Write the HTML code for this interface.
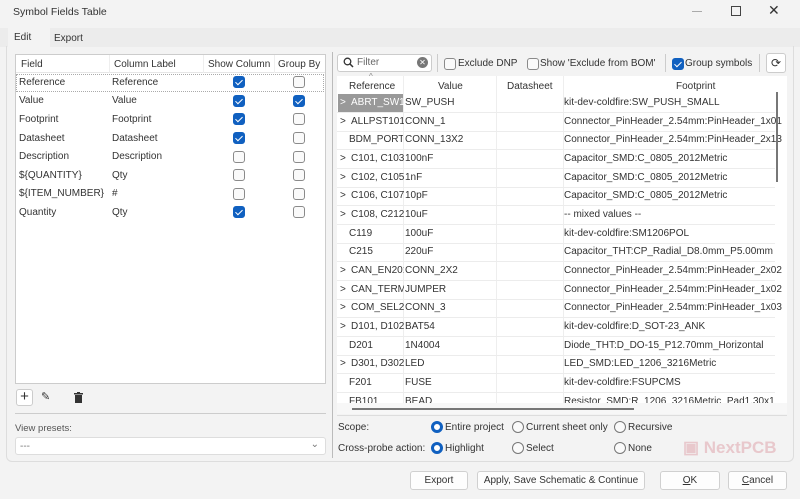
<!DOCTYPE html>
<html><head><meta charset="utf-8"><style>
*{box-sizing:border-box;margin:0;padding:0}
body{width:800px;height:499px;background:#f3f3f3;font-family:"Liberation Sans",sans-serif;font-size:10px;color:#333;position:relative;overflow:hidden}
.a{position:absolute;white-space:nowrap}
.cb{position:absolute;width:12px;height:12px;border:1px solid #8a8a8a;border-radius:3px;background:#fafafa}
.cb.on{background:#1060c0;border-color:#1060c0}
.cb.on:after{content:"";position:absolute;left:3px;top:1px;width:3px;height:6px;border:solid #fff;border-width:0 1.5px 1.5px 0;transform:rotate(45deg)}
.rd{position:absolute;width:12px;height:12px;border:1px solid #777;border-radius:50%;background:#fafafa}
.rd.on{border:3.5px solid #1060c0;background:#fff}
.btn{position:absolute;height:19px;border:1px solid #d0d0d0;border-radius:3px;background:#fdfdfd;text-align:center;line-height:17px;font-size:10px}
.row{position:absolute;left:337px;width:438px;height:19px;border-bottom:1px solid #ececec;line-height:18px;white-space:nowrap}
.row span{position:absolute;overflow:hidden;white-space:nowrap}
.row span:nth-last-child(3){width:53px}
</style></head><body>
<div class="a" style="left:13px;top:6px;font-size:10.5px">Symbol Fields Table</div>
<div class="a" style="left:692px;top:11px;width:10px;border-top:1px solid #aaa"></div>
<div class="a" style="left:731px;top:6px;width:10px;height:10px;border:1px solid #444"></div>
<div class="a" style="left:768px;top:2px;font-size:14px;color:#333">✕</div>
<div class="a" style="left:0;top:28px;width:800px;height:19px;background:#ececec"></div>
<div class="a" style="left:8px;top:28px;width:42px;height:19px;background:#f3f3f3;padding:4px 6px">Edit</div>
<div class="a" style="left:54px;top:33px">Export</div>
<div class="a" style="left:6px;top:46px;width:788px;height:416px;border:1px solid #ddd;border-top:none;border-radius:0 0 6px 6px"></div>
<div class="a" style="left:15px;top:54px;width:311px;height:330px;background:#fff;border:1px solid #ccc"></div>
<div class="a" style="left:16px;top:55px;width:309px;height:18px;border-bottom:1px solid #e6e6e6"></div>
<div class="a" style="left:109px;top:55px;height:18px;border-left:1px solid #eee"></div>
<div class="a" style="left:203px;top:55px;height:18px;border-left:1px solid #eee"></div>
<div class="a" style="left:274px;top:55px;height:18px;border-left:1px solid #eee"></div>
<div class="a" style="left:21px;top:59px">Field</div>
<div class="a" style="left:114px;top:59px">Column Label</div>
<div class="a" style="left:208px;top:59px">Show Column</div>
<div class="a" style="left:278px;top:59px">Group By</div>
<div class="a" style="left:16px;top:74px;width:308px;height:18px;border:1px dotted #aaa"></div>
<div class="a" style="left:112px;top:77px">Reference</div><div class="a" style="left:112px;top:95px">Value</div><div class="a" style="left:112px;top:114px">Footprint</div><div class="a" style="left:112px;top:133px">Datasheet</div><div class="a" style="left:112px;top:151px">Description</div><div class="a" style="left:112px;top:170px">Qty</div><div class="a" style="left:112px;top:188px">#</div><div class="a" style="left:112px;top:207px">Qty</div>
<div class="a" style="left:19px;top:77px">Reference</div><div class="a" style="left:19px;top:95px">Value</div><div class="a" style="left:19px;top:114px">Footprint</div><div class="a" style="left:19px;top:133px">Datasheet</div><div class="a" style="left:19px;top:151px">Description</div><div class="a" style="left:19px;top:170px">${QUANTITY}</div><div class="a" style="left:19px;top:188px">${ITEM_NUMBER}</div><div class="a" style="left:19px;top:207px">Quantity</div>
<div class="cb on" style="left:233px;top:76px"></div><div class="cb" style="left:293px;top:76px"></div>
<div class="cb on" style="left:233px;top:95px"></div><div class="cb on" style="left:293px;top:95px"></div>
<div class="cb on" style="left:233px;top:113px"></div><div class="cb" style="left:293px;top:113px"></div>
<div class="cb on" style="left:233px;top:132px"></div><div class="cb" style="left:293px;top:132px"></div>
<div class="cb" style="left:233px;top:151px"></div><div class="cb" style="left:293px;top:151px"></div>
<div class="cb" style="left:233px;top:169px"></div><div class="cb" style="left:293px;top:169px"></div>
<div class="cb" style="left:233px;top:188px"></div><div class="cb" style="left:293px;top:188px"></div>
<div class="cb on" style="left:233px;top:206px"></div><div class="cb" style="left:293px;top:206px"></div>
<div class="a" style="left:16px;top:389px;width:17px;height:17px;border:1px solid #ccc;border-radius:3px;background:#fff;text-align:center;font-size:15px;line-height:14px">+</div>
<div class="a" style="left:41px;top:390px;font-size:11px">✎</div>
<svg class="a" style="left:74px;top:392px" width="9" height="11"><rect x="0" y="1" width="9" height="1.5" fill="#333"/><rect x="3" y="0" width="3" height="1.5" fill="#333"/><rect x="1" y="3" width="7" height="8" fill="#333"/></svg>
<div class="a" style="left:15px;top:413px;width:311px;border-top:1px solid #ccc"></div>
<div class="a" style="left:15px;top:423px;font-size:9.5px;color:#555">View presets:</div>
<div class="a" style="left:15px;top:437px;width:311px;height:18px;background:#fff;border:1px solid #ddd;border-radius:3px;padding:3px 4px;color:#777">---<span style="position:absolute;right:6px;top:1px">⌄</span></div>
<div class="a" style="left:332px;top:52px;height:406px;border-left:1px solid #bbb"></div>
<div class="a" style="left:337px;top:54px;width:95px;height:18px;background:#fff;border:1px solid #ccc;border-radius:3px"></div>
<svg class="a" style="left:343px;top:57px" width="11" height="11"><circle cx="4.5" cy="4.5" r="3.3" fill="none" stroke="#333" stroke-width="1.3"/><line x1="7" y1="7" x2="10" y2="10" stroke="#333" stroke-width="1.5"/></svg>
<div class="a" style="left:357px;top:57px;color:#666">Filter</div>
<div class="a" style="left:417px;top:57px;width:11px;height:11px;border-radius:50%;background:#777;color:#fff;font-size:8px;line-height:11px;text-align:center">✕</div>
<div class="a" style="left:437px;top:54px;height:18px;border-left:1px solid #ccc"></div>
<div class="cb" style="left:444px;top:58px"></div><div class="a" style="left:458px;top:58px">Exclude DNP</div>
<div class="cb" style="left:527px;top:58px"></div><div class="a" style="left:540px;top:58px">Show 'Exclude from BOM'</div>
<div class="a" style="left:665px;top:54px;height:18px;border-left:1px solid #ccc"></div>
<div class="cb on" style="left:672px;top:58px"></div><div class="a" style="left:685px;top:58px">Group symbols</div>
<div class="a" style="left:759px;top:54px;height:18px;border-left:1px solid #ccc"></div>
<div class="a" style="left:766px;top:53px;width:20px;height:20px;border:1px solid #ccc;border-radius:3px;background:#fff;text-align:center;line-height:18px;font-size:12px">⟳</div>
<div class="a" style="left:337px;top:76px;width:450px;height:330px;background:#fff"></div>
<div class="a" style="left:369px;top:72px;font-size:8px;color:#888">^</div>
<div class="a" style="left:349px;top:81px">Reference</div>
<div class="a" style="left:438px;top:81px">Value</div>
<div class="a" style="left:507px;top:81px">Datasheet</div>
<div class="a" style="left:676px;top:81px">Footprint</div>
<div class="a" style="left:403px;top:76px;height:330px;border-left:1px solid #eee"></div>
<div class="a" style="left:496px;top:76px;height:330px;border-left:1px solid #eee"></div>
<div class="a" style="left:563px;top:76px;height:330px;border-left:1px solid #eee"></div>
<div class="a" style="left:338px;top:94px;width:65px;height:19px;background:#999"></div>
<div class="row" style="top:94px;color:#fff"><span style="left:3px">&gt;</span><span style="left:14px">ABRT_SW101</span><span style="left:68px;color:#333">SW_PUSH</span><span style="left:227px;color:#333">kit-dev-coldfire:SW_PUSH_SMALL</span></div>
<div class="row" style="top:113px"><span style="left:3px">&gt;</span><span style="left:14px">ALLPST101,</span><span style="left:68px">CONN_1</span><span style="left:227px">Connector_PinHeader_2.54mm:PinHeader_1x01</span></div>
<div class="row" style="top:131px"><span style="left:12px;width:54px">BDM_PORT1</span><span style="left:68px">CONN_13X2</span><span style="left:227px">Connector_PinHeader_2.54mm:PinHeader_2x13</span></div>
<div class="row" style="top:150px"><span style="left:3px">&gt;</span><span style="left:14px">C101, C103,</span><span style="left:68px">100nF</span><span style="left:227px">Capacitor_SMD:C_0805_2012Metric</span></div>
<div class="row" style="top:169px"><span style="left:3px">&gt;</span><span style="left:14px">C102, C105</span><span style="left:68px">1nF</span><span style="left:227px">Capacitor_SMD:C_0805_2012Metric</span></div>
<div class="row" style="top:187px"><span style="left:3px">&gt;</span><span style="left:14px">C106, C107</span><span style="left:68px">10pF</span><span style="left:227px">Capacitor_SMD:C_0805_2012Metric</span></div>
<div class="row" style="top:206px"><span style="left:3px">&gt;</span><span style="left:14px">C108, C212</span><span style="left:68px">10uF</span><span style="left:227px">-- mixed values --</span></div>
<div class="row" style="top:225px"><span style="left:12px">C119</span><span style="left:68px">100uF</span><span style="left:227px">kit-dev-coldfire:SM1206POL</span></div>
<div class="row" style="top:243px"><span style="left:12px">C215</span><span style="left:68px">220uF</span><span style="left:227px">Capacitor_THT:CP_Radial_D8.0mm_P5.00mm</span></div>
<div class="row" style="top:262px"><span style="left:3px">&gt;</span><span style="left:14px">CAN_EN201</span><span style="left:68px">CONN_2X2</span><span style="left:227px">Connector_PinHeader_2.54mm:PinHeader_2x02</span></div>
<div class="row" style="top:281px"><span style="left:3px">&gt;</span><span style="left:14px">CAN_TERM201</span><span style="left:68px">JUMPER</span><span style="left:227px">Connector_PinHeader_2.54mm:PinHeader_1x02</span></div>
<div class="row" style="top:299px"><span style="left:3px">&gt;</span><span style="left:14px">COM_SEL201</span><span style="left:68px">CONN_3</span><span style="left:227px">Connector_PinHeader_2.54mm:PinHeader_1x03</span></div>
<div class="row" style="top:318px"><span style="left:3px">&gt;</span><span style="left:14px">D101, D102</span><span style="left:68px">BAT54</span><span style="left:227px">kit-dev-coldfire:D_SOT-23_ANK</span></div>
<div class="row" style="top:337px"><span style="left:12px">D201</span><span style="left:68px">1N4004</span><span style="left:227px">Diode_THT:D_DO-15_P12.70mm_Horizontal</span></div>
<div class="row" style="top:355px"><span style="left:3px">&gt;</span><span style="left:14px">D301, D302</span><span style="left:68px">LED</span><span style="left:227px">LED_SMD:LED_1206_3216Metric</span></div>
<div class="row" style="top:374px"><span style="left:12px">F201</span><span style="left:68px">FUSE</span><span style="left:227px">kit-dev-coldfire:FSUPCMS</span></div>
<div class="row" style="top:393px;height:12px;overflow:hidden;border:none"><span style="left:12px">FB101</span><span style="left:68px">BEAD</span><span style="left:227px">Resistor_SMD:R_1206_3216Metric_Pad1.30x1.75</span></div>
<div class="a" style="left:337px;top:403px;width:450px;height:11px;background:#f7f7f7"></div>
<div class="a" style="left:352px;top:408px;width:282px;height:2px;background:#777"></div>
<div class="a" style="left:776px;top:92px;width:2px;height:90px;background:#777"></div>
<div class="a" style="left:337px;top:415px;width:450px;border-top:1px solid #ddd"></div>
<div class="a" style="left:338px;top:422px">Scope:</div>
<div class="rd on" style="left:431px;top:421px"></div><div class="a" style="left:445px;top:422px">Entire project</div>
<div class="rd" style="left:512px;top:421px"></div><div class="a" style="left:526px;top:422px">Current sheet only</div>
<div class="rd" style="left:614px;top:421px"></div><div class="a" style="left:628px;top:422px">Recursive</div>
<div class="a" style="left:338px;top:443px">Cross-probe action:</div>
<div class="rd on" style="left:431px;top:442px"></div><div class="a" style="left:445px;top:443px">Highlight</div>
<div class="rd" style="left:512px;top:442px"></div><div class="a" style="left:526px;top:443px">Select</div>
<div class="rd" style="left:614px;top:442px"></div><div class="a" style="left:628px;top:443px">None</div>
<div class="a" style="left:683px;top:438px;font-size:17px;font-weight:bold;color:#e8c8cc">▣ NextPCB</div>
<div class="btn" style="left:410px;top:471px;width:58px">Export</div>
<div class="btn" style="left:477px;top:471px;width:168px">Apply, Save Schematic &amp; Continue</div>
<div class="btn" style="left:660px;top:471px;width:60px"><u>O</u>K</div>
<div class="btn" style="left:728px;top:471px;width:59px"><u>C</u>ancel</div>
</body></html>
